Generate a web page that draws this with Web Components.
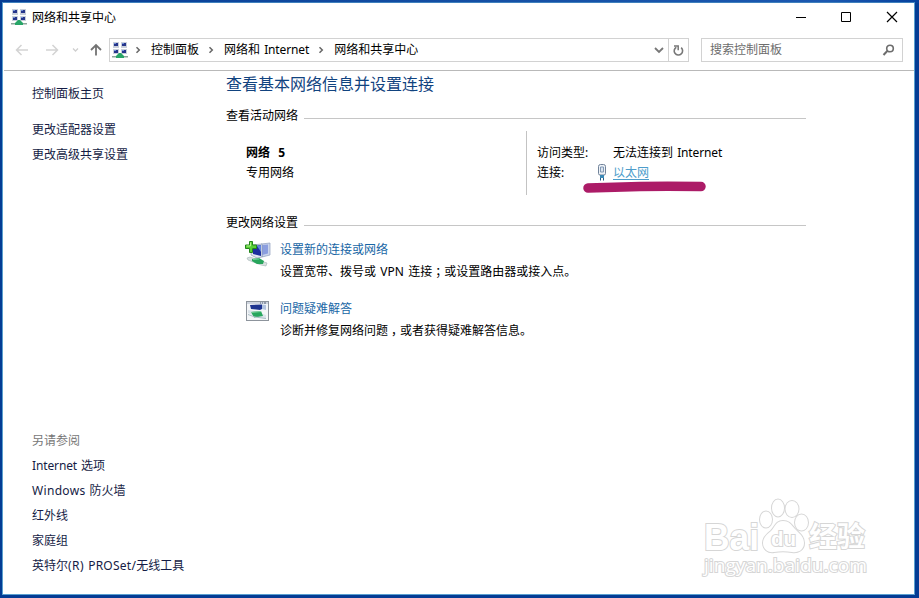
<!DOCTYPE html>
<html lang="zh-CN">
<head>
<meta charset="utf-8">
<title>网络和共享中心</title>
<style>
    html, body{
        margin: 0;
        height: 100%;
        overflow: hidden;
    }
    body{
        font: 12px/20px "Noto Sans", "Noto Sans CJK SC", sans-serif;
        word-spacing: 1px;
        color: #000;
    }
</style>
</head>
<body>

<app-window>
    <title-bar slot="title">网络和共享中心</title-bar>
    <address-bar slot="address">
        <path-item>控制面板</path-item>
        <path-item>网络和 <fit-text width="45">Internet</fit-text></path-item>
        <path-item>网络和共享中心</path-item>
        <span slot="search">搜索控制面板</span>
    </address-bar>
    <side-nav slot="nav">
        <nav-link slot="home">控制面板主页</nav-link>
        <nav-link>更改适配器设置</nav-link>
        <nav-link>更改高级共享设置</nav-link>
        <nav-link slot="also" muted>另请参阅</nav-link>
        <nav-link slot="also"><fit-text width="45">Internet</fit-text> 选项</nav-link>
        <nav-link slot="also"><fit-text width="53.500">Windows</fit-text> 防火墙</nav-link>
        <nav-link slot="also">红外线</nav-link>
        <nav-link slot="also">家庭组</nav-link>
        <nav-link slot="also">英特尔<fit-text width="16">(R)</fit-text> <fit-text width="48">PROSet/</fit-text>无线工具</nav-link>
    </side-nav>
    <page-title>查看基本网络信息并设置连接</page-title>
    <group-head>查看活动网络</group-head>
    <active-network>
        <span slot="name">网络&nbsp; 5</span>
        <span slot="type">专用网络</span>
        <span slot="access-label">访问类型:</span>
        <span slot="access">无法连接到 <fit-text width="45">Internet</fit-text></span>
        <span slot="link-label">连接:</span>
        <span slot="link">以太网</span>
    </active-network>
    <group-head>更改网络设置</group-head>
    <task-item icon="add">
        <span slot="link">设置新的连接或网络</span>
        设置宽带、拨号或 <fit-text width="24">VPN</fit-text> 连接<mid-mark>；</mid-mark>或设置路由器或接入点。
    </task-item>
    <task-item icon="fix">
        <span slot="link">问题疑难解答</span>
        诊断并修复网络问题<mid-mark>，</mid-mark>或者获得疑难解答信息。
    </task-item>
</app-window>
<pen-stroke></pen-stroke>
<water-mark></water-mark>

<script>
const networkIcon = `
    <svg width="16" height="17" viewBox="0 0 16 17">
        <g fill="#c9cfdb"><path d="M1 0h6v6H1zM9 0h6v6H9zM1 7h6v5H1zM9 7h6v5H9z"/></g>
        <g fill="#26358c"><path d="M2 1h4v3H2zM10 1h4v3h-4zM2 8h4v3H2zM10 8h4v3h-4z"/></g>
        <g fill="#6f8fd8"><path d="M2 1h2v1H2zM10 1h2v1h-2zM2 8h2v1H2zM10 8h2v1h-2z"/></g>
        <path d="M0 14h16v1.5H0z" fill="#8aa69a"/>
        <path d="M7 11h2l3 3v2H4v-2z" fill="#27a567"/>
    </svg>`;

const taskIcons = {
    add: `
    <svg width="26" height="27" viewBox="0 0 26 27">
        <path d="M16 4l9-1v12l-8 2z" fill="#cbd5ec" stroke="#8f9dbd" stroke-width=".7"/>
        <path d="M17 5l6-.5v9l-6 1.500z" fill="#8b9edf"/>
        <path d="M7 5l10-1v13l-5 1-6-3z" fill="#e2e7f2" stroke="#8b98b0" stroke-width=".7"/>
        <path d="M8 6l8-1v11l-8-2z" fill="#1d2f9f"/>
        <path d="M12 6l4-1v7z" fill="#6285df"/>
        <path d="M2 18l3-1 17 6-1 3-5-1-13-5z" fill="#d9e1e1" stroke="#a3b3b3" stroke-width=".6"/>
        <path d="M7 19l7-1 5 3-1 3h-6l-5-3z" fill="#28a55c"/>
        <path d="M8 19.500l6-.5" stroke="#74d39b"/>
        <path d="M4.500 1.500h3v3.500h4v3.500h-4v4h-3v-4h-4V5h4z" fill="#59cf36" stroke="#24851c"/>
        <path d="M5.500 2.500V6H1.500" fill="none" stroke="#b4f48f"/>
    </svg>`,
    fix: `
    <svg width="26" height="24" viewBox="0 0 26 24">
        <rect x="1.500" y="2.500" width="22" height="19" fill="#f4f6f8" stroke="#8d949c"/>
        <path d="M2 3h21v2H2z" fill="#cfd5df"/>
        <path d="M15 4h1m1 0h1m1 0h2" stroke="#526177"/>
        <path d="M5 6l12-.5v4.500l-2 1-9-1z" fill="#1f3590"/>
        <path d="M17 5.500l4 .5v5l-4-1z" fill="#b3c4e0"/>
        <path d="M3 11l6 1 12 4v4l-8-2-10-4z" fill="#dbe3ea"/>
        <path d="M6 13l10-1 2 5-9 1.500z" fill="#27a75e"/>
        <path d="M6 13.500l10-1" stroke="#7fd29e"/>
        <path d="M3 15.500l7 2.500 11 1.500" fill="none" stroke="#a9bcc4"/>
    </svg>`
};

// Inline run of latin text, spread or tightened to a given advance width
class FitText extends HTMLElement{

    constructor(){
        super();
        this.$ = this.attachShadow({mode: 'open'})
        this.$.innerHTML = `
            <style>
                :host{
                    display: inline-block;
                    white-space: nowrap;
                }
            </style>
            <slot></slot>
        `;
    }

    connectedCallback(){
        const width = Number(this.getAttribute('width'));
        const natural = this.getBoundingClientRect().width;
        const count = this.textContent.length;
        if(count && natural){
            this.style.letterSpacing = (width - natural) / count + 'px';
        }
    }
}

// Full-width punctuation set in the middle of its cell
class MidMark extends HTMLElement{

    constructor(){
        super();
        this.$ = this.attachShadow({mode: 'open'})
        this.$.innerHTML = `
            <style>
                :host{
                    display: inline-block;
                    box-sizing: border-box;
                    width: 12px;
                    padding-left: 3px;
                    letter-spacing: -3px;
                    white-space: nowrap;
                }
            </style>
            <slot></slot>
        `;
    }
}

class AppWindow extends HTMLElement{

    constructor(){
        super();
        this.$ = this.attachShadow({mode: 'open'})
        this.$.innerHTML = `
            <style>
                :host{
                    display: block;
                    box-sizing: border-box;
                    height: 598px;
                    padding: 2px 4px 3px 2px;
                    background: linear-gradient(90deg, #063c94, #1550a5 55%, #1b58b0 90%, #06419d) top / 100% 3px no-repeat, #043c94;
                }
                .frame{
                    display: grid;
                    grid-template: 31px 37px 1fr / 222px 1fr;
                    box-sizing: border-box;
                    height: 100%;
                    background: #fff;
                    border: 1px solid #5aa0cf;
                    border-top-color: #3f80bd;
                }
                .wide{
                    grid-column: 1 / 3;
                }
                .address{
                    border-bottom: 1px solid #b9b9b9;
                    margin-left: 1px;
                }
                main{
                    padding-left: 1px;
                    width: 580px;
                }
            </style>
            <div class="frame">
                <div class="wide"><slot name="title"></slot></div>
                <div class="wide address"><slot name="address"></slot></div>
                <slot name="nav"></slot>
                <main><slot></slot></main>
            </div>
        `;
    }
}

class TitleBar extends HTMLElement{

    constructor(){
        super();
        this.$ = this.attachShadow({mode: 'open'})
        this.$.innerHTML = `
            <style>
                :host{
                    display: flex;
                    align-items: center;
                    height: 29px;
                    padding: 0 16px 0 8px;
                }
                .text{
                    flex: 1;
                    margin-left: 5px;
                }
                svg{
                    display: block;
                }
                .buttons{
                    display: flex;
                    gap: 34px;
                    margin-top: -2px;
                }
            </style>
            ${networkIcon}
            <span class="text"><slot></slot></span>
            <div class="buttons">
                <svg width="12" height="12"><path d="M2 6.500h10" stroke="#000"/></svg>
                <svg width="12" height="12"><path d="M1.500 1.500h9v9h-9z" fill="none" stroke="#000"/></svg>
                <svg width="12" height="12"><path d="M1 1l10 10M11 1L1 11" stroke="#000" stroke-width="1.200"/></svg>
            </div>
        `;
    }
}

class AddressBar extends HTMLElement{

    constructor(){
        super();
        this.$ = this.attachShadow({mode: 'open'})
        this.$.innerHTML = `
            <style>
                :host{
                    display: flex;
                    padding: 4px 11px 0 0;
                    height: 24px;
                }
                svg{
                    display: block;
                }
                .arrows{
                    width: 105px;
                }
                .box{
                    display: flex;
                    align-items: center;
                    box-sizing: border-box;
                    height: 24px;
                    border: 1px solid #d2d2d2;
                }
                .path{
                    width: 580px;
                    padding-left: 2px;
                }
                .items{
                    display: flex;
                    flex: 1;
                    margin-left: -2px;
                }
                .drop{
                    margin-right: 3px;
                }
                .refresh{
                    display: flex;
                    align-items: center;
                    justify-content: center;
                    width: 19px;
                    height: 22px;
                    border-left: 1px solid #d2d2d2;
                }
                .search{
                    flex: 1;
                    justify-content: space-between;
                    margin-left: 12px;
                    padding: 0 7px 0 8px;
                    color: #6d6d6d;
                }
            </style>
            <svg class="arrows" width="105" height="24" fill="none">
                <path d="M12.500 12H24M17.500 7l-5 5 5 5" stroke="#d3d3d3" stroke-width="1.500"/>
                <path d="M42 12h11.500M48.500 7l5 5-5 5" stroke="#d3d3d3" stroke-width="1.500"/>
                <path d="M69 10.500l2.500 2.500 2.500-2.500" stroke="#cfcfcf" stroke-width="1.300"/>
                <path d="M92 17.500V7M87 12l5-5 5 5" stroke="#737373" stroke-width="1.800"/>
            </svg>
            <div class="box path">
                ${networkIcon}
                <div class="items"><slot></slot></div>
                <svg class="drop" width="12" height="8" fill="none"><path d="M2 2l4 4 4-4" stroke="#777" stroke-width="1.800"/></svg>
                <div class="refresh">
                    <svg width="13" height="13" fill="none" stroke="#777" stroke-width="1.600">
                        <path d="M9.200 3.700A4.200 4.200 0 1 1 4.300 3.200"/>
                        <path d="M2 2h4.200v4.200" stroke-width="1.500"/>
                    </svg>
                </div>
            </div>
            <div class="box search">
                <slot name="search"></slot>
                <svg width="13" height="12" fill="none" stroke="#6d6d6d" stroke-width="1.600">
                    <circle cx="8" cy="4.500" r="3.300"/>
                    <path d="M5.500 6.800L1.500 11" stroke-width="2"/>
                </svg>
            </div>
        `;
    }
}

class PathItem extends HTMLElement{

    constructor(){
        super();
        this.$ = this.attachShadow({mode: 'open'})
        this.$.innerHTML = `
            <style>
                :host{
                    display: flex;
                    align-items: center;
                    white-space: pre;
                }
                svg{
                    width: 25px;
                    height: 8px;
                }
            </style>
            <svg viewBox="0 0 25 8" fill="none"><path d="M10.500 1.200l2.800 2.800-2.800 2.800" stroke="#666" stroke-width="1.500"/></svg>
            <span><slot></slot></span>
        `;
    }
}

class SideNav extends HTMLElement{

    constructor(){
        super();
        this.$ = this.attachShadow({mode: 'open'})
        this.$.innerHTML = `
            <style>
                :host{
                    display: flex;
                    flex-direction: column;
                    justify-content: space-between;
                    box-sizing: border-box;
                    padding: 10px 0 16px 29px;
                }
                .tasks{
                    margin-top: 11px;
                }
            </style>
            <div>
                <slot name="home"></slot>
                <div class="tasks"><slot></slot></div>
            </div>
            <div><slot name="also"></slot></div>
        `;
    }
}

class NavLink extends HTMLElement{

    constructor(){
        super();
        this.$ = this.attachShadow({mode: 'open'})
        this.$.innerHTML = `
            <style>
                :host{
                    display: block;
                    line-height: 25px;
                    color: #151c45;
                }
                :host([muted]){
                    color: #777;
                }
            </style>
            <slot></slot>
        `;
    }
}

class PageTitle extends HTMLElement{

    constructor(){
        super();
        this.$ = this.attachShadow({mode: 'open'})
        this.$.innerHTML = `
            <style>
                :host{
                    display: block;
                    height: 35px;
                    font-size: 16px;
                    line-height: 26px;
                    color: #11437f;
                }
            </style>
            <slot></slot>
        `;
    }
}

class GroupHead extends HTMLElement{

    constructor(){
        super();
        this.$ = this.attachShadow({mode: 'open'})
        this.$.innerHTML = `
            <style>
                :host{
                    display: flex;
                    align-items: center;
                    gap: 6px;
                    height: 20px;
                }
                i{
                    flex: 1;
                    height: 1px;
                    margin-top: 5px;
                    background: #c6c6c6;
                }
            </style>
            <slot></slot><i></i>
        `;
    }
}

class ActiveNetwork extends HTMLElement{

    constructor(){
        super();
        this.$ = this.attachShadow({mode: 'open'})
        this.$.innerHTML = `
            <style>
                :host{
                    display: grid;
                    grid-template-columns: 300px 1fr;
                    height: 64px;
                    margin: 5px 0 18px;
                }
                .left{
                    padding: 12px 0 0 20px;
                }
                .left div:first-child{
                    font-weight: bold;
                }
                .right{
                    display: grid;
                    grid-template-columns: 76px 1fr;
                    grid-auto-rows: 20px;
                    padding: 12px 0 0 10px;
                    border-left: 1px solid #c3c3c3;
                }
                .label{
                    display: flex;
                    justify-content: space-between;
                }
                .label svg{
                    margin: 1px 5px 0 0;
                }
                .link{
                    color: #4d9dcb;
                    text-decoration: underline;
                    text-underline-offset: 2px;
                }
            </style>
            <div class="left">
                <div><slot name="name"></slot></div>
                <div><slot name="type"></slot></div>
            </div>
            <div class="right">
                <div class="label"><slot name="access-label"></slot></div>
                <div><slot name="access"></slot></div>
                <div class="label">
                    <slot name="link-label"></slot>
                    <svg width="12" height="17" viewBox="0 0 12 17">
                        <path d="M2.500 2.500q0-2 2-2h3q2 0 2 2v7q0 1.500-1.500 1.500H4Q2.500 11 2.500 9.500z" fill="#eef2f7" stroke="#71839a"/>
                        <path d="M4.500 3h3v5h-3z" fill="#dbe5f0" stroke="#8299b5"/>
                        <path d="M4 11h4v3H4z" fill="#3b89b6"/>
                        <path d="M4.500 14v2.500M7.500 14v2.500" stroke="#255b86"/>
                    </svg>
                </div>
                <div><span class="link"><slot name="link"></slot></span></div>
            </div>
        `;
    }
}

class TaskItem extends HTMLElement{

    constructor(){
        super();
        this.$ = this.attachShadow({mode: 'open'})
        this.$.innerHTML = `
            <style>
                :host{
                    display: flex;
                    height: 52px;
                    padding: 7px 0 0 19px;
                    white-space: nowrap;
                }
                .icon{
                    width: 35px;
                }
                .link{
                    margin-bottom: 2px;
                    color: #1766a5;
                }
            </style>
            <div class="icon"></div>
            <div>
                <div class="link"><slot name="link"></slot></div>
                <div><slot></slot></div>
            </div>
        `;
    }

    connectedCallback(){
        this.$.querySelector('.icon').innerHTML = taskIcons[this.getAttribute('icon')];
    }
}

class PenStroke extends HTMLElement{

    constructor(){
        super();
        this.$ = this.attachShadow({mode: 'open'})
        this.$.innerHTML = `
            <style>
                :host{
                    display: block;
                    position: absolute;
                    left: 580px;
                    top: 178px;
                }
            </style>
            <svg width="130" height="18" fill="none">
                <path d="M8 10Q35 9 60 8.500T121 8.500" stroke="#ac1b67" stroke-width="9.500" stroke-linecap="round"/>
            </svg>
        `;
    }
}

class WaterMark extends HTMLElement{

    constructor(){
        super();
        this.$ = this.attachShadow({mode: 'open'})
        this.$.innerHTML = `
            <style>
                :host{
                    display: block;
                    position: absolute;
                    left: 700px;
                    top: 495px;
                }
                svg{
                    fill: #fff;
                    stroke: #d6d6d6;
                    paint-order: stroke;
                    font-family: "Liberation Sans", "Noto Sans CJK SC", sans-serif;
                    font-weight: bold;
                    word-spacing: 0;
                }
                .paw{
                    stroke-width: 2;
                }
                .url{
                    font-family: "Open Sans", sans-serif;
                    font-weight: normal;
                }
            </style>
            <svg width="175" height="90">
                <g class="paw">
                    <ellipse cx="66" cy="24.500" rx="6" ry="8"/>
                    <ellipse cx="78" cy="13" rx="6" ry="8.500"/>
                    <ellipse cx="92" cy="14" rx="6.500" ry="8"/>
                    <ellipse cx="101.500" cy="27.500" rx="6.500" ry="8"/>
                    <path d="M83 26c7 0 9 5 13 9 4 4 8 7 8 13 0 7-6 10-12 9-6-1-12-1-18 0-6 1-11-3-11-9 0-5 4-9 8-12 4-4 5-10 12-10z"/>
                </g>
                <g stroke-width="2">
                    <text x="4" y="55" font-size="37" textLength="55" lengthAdjust="spacingAndGlyphs">Bai</text>
                    <text x="71" y="51" font-size="20" textLength="25" lengthAdjust="spacingAndGlyphs">du</text>
                    <text x="109" y="52" font-size="28" textLength="56">经验</text>
                    <text class="url" x="4" y="77" font-size="17.500" textLength="163" lengthAdjust="spacingAndGlyphs">jingyan.baidu.com</text>
                </g>
            </svg>
        `;
    }
}

customElements.define('fit-text', FitText)
customElements.define('mid-mark', MidMark)
customElements.define('app-window', AppWindow)
customElements.define('title-bar', TitleBar)
customElements.define('address-bar', AddressBar)
customElements.define('path-item', PathItem)
customElements.define('side-nav', SideNav)
customElements.define('nav-link', NavLink)
customElements.define('page-title', PageTitle)
customElements.define('group-head', GroupHead)
customElements.define('active-network', ActiveNetwork)
customElements.define('task-item', TaskItem)
customElements.define('pen-stroke', PenStroke)
customElements.define('water-mark', WaterMark)
</script>
</body>
</html>
